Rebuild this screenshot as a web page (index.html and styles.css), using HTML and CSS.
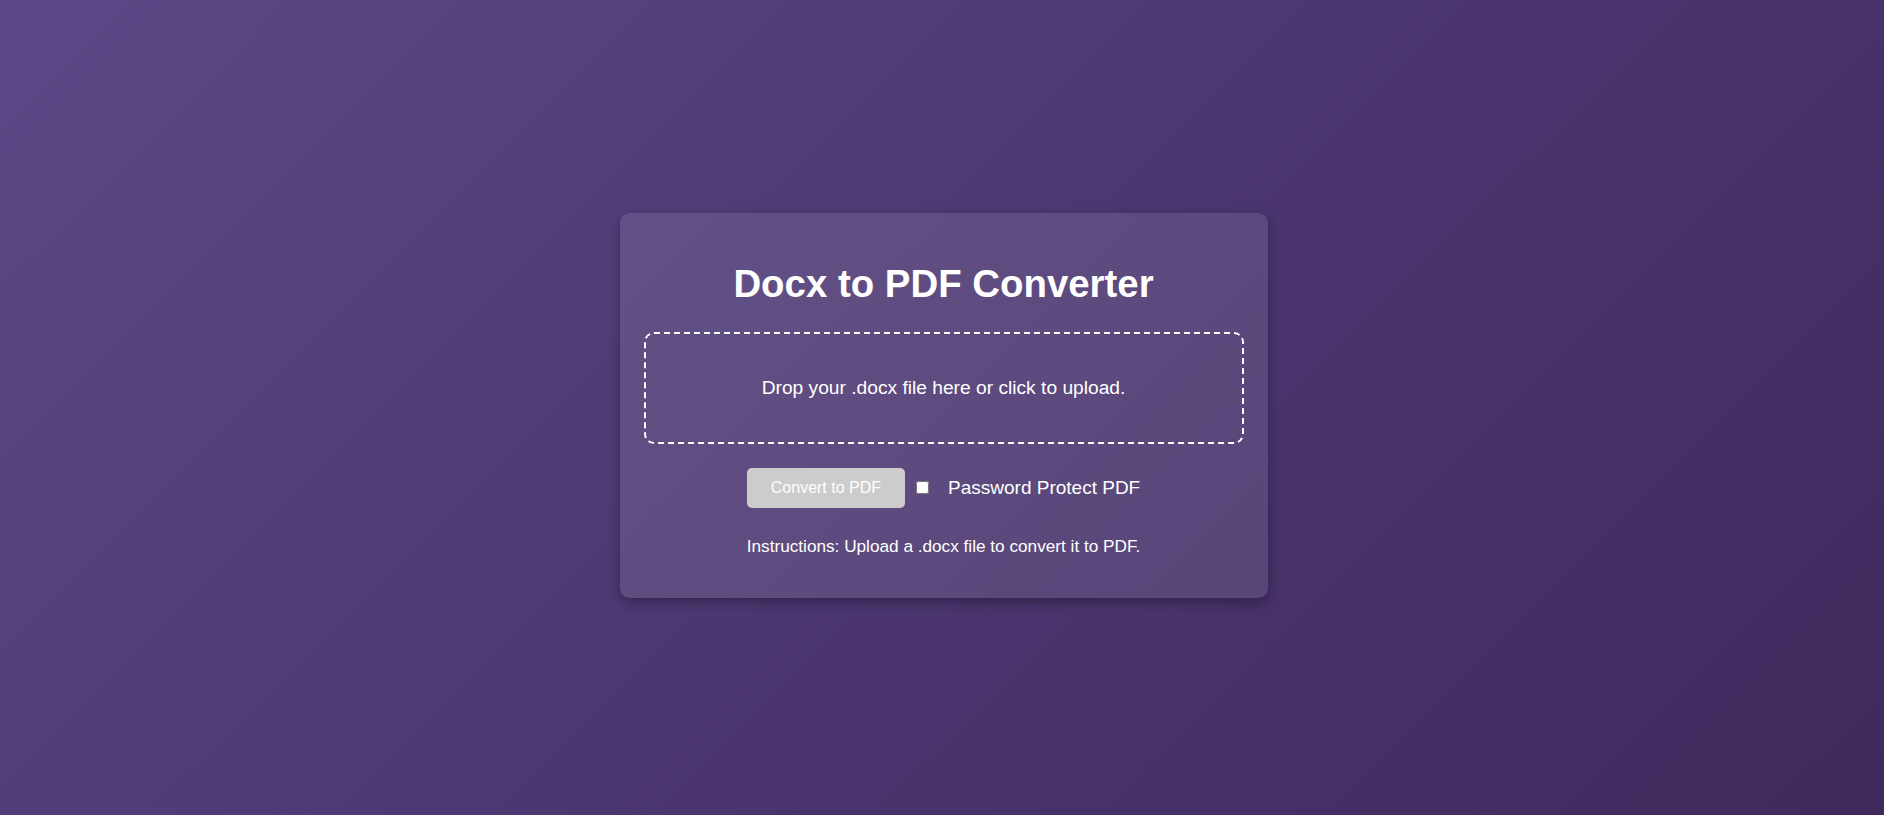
FILE: index.html
```html
<!DOCTYPE html>
<html lang="en">
<head>
<meta charset="utf-8">
<title>Docx to PDF Converter</title>
<link rel="stylesheet" href="styles.css">
</head>
<body>
  <main class="card">
    <h1 class="title">Docx to PDF Converter</h1>
    <div class="dropzone">
      <p class="dropzone-text">Drop your .docx file here or click to upload.</p>
    </div>
    <div class="actions">
      <button class="convert-btn" disabled>Convert to PDF</button>
      <input type="checkbox" id="protect" class="protect-check">
      <label for="protect" class="protect-label">Password Protect PDF</label>
    </div>
    <p class="instructions">Instructions: Upload a .docx file to convert it to PDF.</p>
  </main>
</body>
</html>
```

FILE: styles.css
```css
html, body {
  margin: 0;
  padding: 0;
}
body {
  box-sizing: border-box;
  min-height: 100vh;
  padding: 0 0 4.5px 3px;
  display: flex;
  align-items: center;
  justify-content: center;
  background: linear-gradient(135deg, #5b4a87 0%, #4a356f 55%, #40295c 100%);
  font-family: "Liberation Sans", Arial, Helvetica, sans-serif;
  color: #fff;
}
.card {
  width: 600px;
  padding: 24px;
  border-radius: 10px;
  background: rgba(255, 255, 255, 0.1);
  box-shadow: 0 4px 12px rgba(0, 0, 0, 0.3);
  text-align: center;
}
.title {
  font-size: 38.4px;
  font-weight: bold;
  margin: 25.7px 0;
  line-height: normal;
}
.dropzone {
  border: 2px dashed #fff;
  border-radius: 10px;
  padding: 24px;
  cursor: pointer;
}
.dropzone-text {
  font-size: 19.2px;
  margin: 19.2px 0;
}
.actions {
  display: flex;
  align-items: center;
  justify-content: center;
  margin-top: 24px;
}
.convert-btn {
  font-family: "Liberation Sans", Arial, Helvetica, sans-serif;
  font-size: 16px;
  line-height: normal;
  padding: 11px 24px;
  border: none;
  border-radius: 5px;
  background: #ccc;
  color: #fff;
}
.protect-check {
  width: 13px;
  height: 13px;
  margin: 0 0 2px 11px;
}
.protect-label {
  font-size: 19px;
  margin: 0 0 1px 19px;
}
.instructions {
  font-size: 17.2px;
  margin: 27.5px 0 17px;
}
```
